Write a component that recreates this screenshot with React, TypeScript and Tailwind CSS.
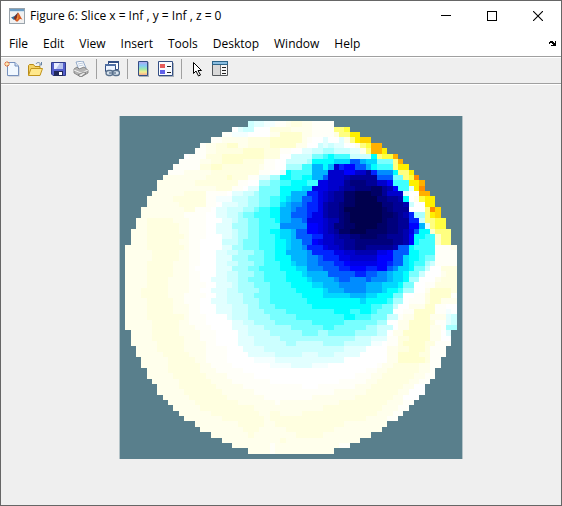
import type { ReactNode } from "react";

const PALETTE: Record<string, string> = {
  K: "#00004d", j: "#000066", k: "#00007c", m: "#000096", n: "#0000b0",
  p: "#0000cc", b: "#0000e6", B: "#0000ff", u: "#0024ff", U: "#005cff",
  v: "#008cff", V: "#00b4ff", c: "#00d8ff", C: "#00ffff", d: "#40ffff",
  e: "#78ffff", f: "#a8ffff", g: "#ccffff", h: "#e2ffff", i: "#f4ffff",
  W: "#ffffff", w: "#fffff8", x: "#ffffec", y: "#ffffe0", z: "#ffffce",
  Z: "#ffff80", Y: "#ffff40", a: "#fff000", o: "#ffd400", O: "#ffb000",
  r: "#ff8c00",
};

const GRID = 64;

// First column inside the disc for rows 1..31; the lower half mirrors it.
const LEFT = [
  64, 24, 21, 19, 17, 15, 14, 12, 11, 10, 9, 8, 7, 7, 6, 5, 5, 4, 4, 3, 3, 2,
  2, 2, 1, 1, 1, 1, 1, 1, 1, 1,
];

// Rows 1..62 of the slice: each token is a colour key and the column it runs up to.
const ROWS = [
  "g25 h27 i29 w31 x32 y34 x36 w40",
  "W22 h23 g25 W28 y32 x36 w40 Z42 Y43",
  "w21 i24 W28 x30 z34 x36 w40 y41 Z43 a45",
  "w19 x24 y28 z34 x35 w36 W38 h39 W41 h42 x43 Z44 a45 o47",
  "w16 x18 y20 z22 x24 y28 z33 x35 W37 g38 h39 g40 h42 W44 x45 Z46 Y47 O49",
  "w16 x18 y23 z27 y30 w32 W34 h36 g38 f40 g43 h45 x46 Z47 O49 a50",
  "W13 w16 y19 z27 y30 W32 g36 e38 d39 C40 d43 g47 C48 Z49 Y51 O52",
  "w15 x17 y19 z23 y27 w29 W31 g35 f36 C40 c43 U45 V46 c48 e51 Z52 O53",
  "w15 y17 z19 y26 x27 w29 W31 f34 d36 V38 C39 V40 p41 u42 B44 U46 V47 C48 d51 Z52 a54",
  "w12 x17 y26 w28 W30 h31 C32 d36 V39 p42 B44 p46 m47 u48 v51 C52 Z54 a55",
  "x16 y20 z21 y24 w26 h28 f30 C32 d34 C36 V38 U39 p42 n43 m48 U51 e53 Z54 Y55 r56",
  "x14 y22 w24 W26 f28 e30 d32 C35 d37 b39 p42 m43 k46 m48 p50 B51 d54 a56 O57",
  "x18 y21 w23 W24 h26 e30 C34 c36 b39 p41 n42 m44 k47 j49 m50 n51 B52 d54 h55 a56 r57",
  "x12 y16 w20 W21 h23 g25 f26 e30 C32 V35 u37 b38 p39 n40 m42 j44 K47 j49 m50 p53 h54 W56 O58",
  "x10 y16 w18 i21 g24 f26 e28 d30 C31 c32 V34 U36 u37 b38 p39 n40 m42 j44 K48 k50 m52 n53 C54 W55 x56 Y57 a59",
  "x11 y16 w18 W19 h22 g24 f26 e28 d30 c31 V32 v34 U35 u37 b38 n39 m41 k42 j44 K49 k51 m53 n54 g55 W57 a59",
  "x12 y14 w17 W18 h20 g23 f25 e26 d28 C30 V32 v33 U35 u37 b38 n39 m41 k42 K49 j50 k51 m54 W57 Z58 r59 o60",
  "x12 w16 W18 h20 g22 f23 e25 d28 C30 V32 U35 u36 b38 n39 m41 k42 j43 K49 j51 k52 m53 n54 u55 f57 Z58 a59 o60",
  "x5 y10 x13 w16 W19 h21 g22 f24 e26 d29 C30 V32 v34 U35 b38 p39 n41 k42 j43 K49 j50 k52 m54 u56 g57 Z59 Y61",
  "x5 y11 x13 w16 W18 h21 f24 e26 d30 v33 v35 B37 b38 p39 n40 k42 j44 K48 j50 k52 m54 B56 V57 h58 Z59 Y61",
  "x5 y11 x13 w16 W18 h21 g22 f24 e26 d28 C30 c32 V33 U35 B37 b38 p39 n40 m41 j43 K46 j50 k52 m53 n54 b55 U56 C58 z59 Z62",
  "x5 y12 x13 w16 W19 h21 g22 f24 e26 d29 C30 c32 V33 U36 u38 p40 n41 m43 k45 j48 k50 m53 n54 B55 C57 d59 z60 Z62",
  "x5 y11 x13 w15 W19 g22 f23 e26 d29 C31 c32 V34 U36 B37 b38 p40 n42 m44 k51 m53 n54 B55 C56 d59 z60 Z62",
  "x5 y12 x13 w15 W19 h21 f23 e26 d29 C31 c32 V34 v35 u38 b39 p41 n42 m44 k46 m51 n52 U54 C55 d59 w62 x63",
  "x6 y11 x13 w15 W18 h20 g22 f25 e27 d29 C31 V35 v36 u40 b42 p44 n48 b50 B51 U54 C56 d59 w63",
  "x6 y11 x13 w15 W18 h21 f24 e27 d29 C32 V35 v37 U38 u41 b43 p48 B51 U53 c54 C56 d57 e59 w63",
  "x5 y10 x13 w15 W18 h20 g22 f25 e27 d30 C32 c33 V35 v37 U40 u42 B43 b48 B50 u51 U53 c54 C55 d57 f58 g59 w63",
  "x5 y10 x13 w14 W18 h21 f24 e26 d30 C33 c35 v38 U41 u43 B46 u48 B50 U51 v52 c54 C55 e57 g58 W60 y63",
  "x5 y10 x13 w15 W18 h20 g22 f25 e27 d31 C34 c35 V39 U44 u46 U48 v50 V51 c53 C54 e56 g57 W60 x61 y63",
  "x5 y9 x13 w15 W17 h20 g22 f24 e27 d31 C35 c36 V40 v41 U43 v46 U47 v50 V51 c53 C54 f56 W59 x60 y63",
  "x5 y9 x13 w16 W18 h21 g22 f25 e28 d32 C36 c38 V41 v46 V49 c52 C53 e55 W57 w59 y63",
  "x4 y9 x13 w15 W17 h20 g22 f26 e28 d33 C38 c39 V42 v46 V49 c50 C52 d53 f55 W57 x58 z62 y63",
  "x4 y9 x12 w16 W18 h20 g23 f25 e28 d34 C38 c43 V46 c48 C51 e53 W55 w57 y58 z62 w63",
  "x5 y10 x12 w15 W17 h20 g23 f26 e28 d35 C45 c46 C50 d51 f53 W54 w57 y58 z60 x63",
  "x5 y10 x13 w15 W18 h21 g24 f26 e29 d36 C47 d49 e51 g52 W54 x57 z59 w61 W63",
  "x5 y10 x13 w15 W18 h21 g24 f27 e31 d40 C43 d45 C47 d48 e51 W53 w55 z59 w61 i62 W63",
  "x5 y12 x13 w16 W20 h21 g24 f28 e33 d42 C44 d47 e50 g52 w53 x55 z58 x61 h62 g63",
  "x6 y11 x13 w16 W21 h23 g25 f29 e36 d42 e48 f50 W52 x54 z58 y59 w61 h62 g63",
  "x6 y11 x14 w17 W21 h24 g27 f32 e38 d40 e46 f48 g51 W52 x54 z58 x60 w61 f63",
  "x6 y11 x15 w18 W22 h24 g28 f34 e37 f39 e44 f48 g50 W51 x53 z58 x60 W61 h62",
  "x6 y12 x15 w18 W22 h25 g30 f44 g47 h50 w52 y54 z58 x60 W62",
  "x7 y12 x16 w18 W22 h25 g31 f33 g38 f42 g47 i49 W50 w52 y53 z57 y59 w61",
  "x7 y12 x16 w20 W23 h27 g42 h46 W50 x52 y54 z57 y58 w61",
  "x8 y13 x16 w20 W24 h29 g34 h37 g40 h45 W50 x52 z56 y58 w60",
  "x9 y14 x16 w20 W25 i29 h42 W50 x52 z57 y58 w60",
  "x9 y15 x17 w21 W28 i32 h36 i39 W48 w49 x51 y56 x58 w59",
  "x9 y15 x18 w23 W46 w48 x50 y56 x58 w59",
  "x10 y16 x20 w25 W44 w47 x49 y55 x57 w58",
  "x11 y17 x21 w28 W41 w46 x48 y54 x56 w58",
  "x11 y18 x23 w34 W37 w44 x47 y53 x55 W57",
  "x12 y19 x25 w40 x46 y52 x54 W57",
  "x13 y20 x27 w36 x44 y51 x53 W56",
  "x14 y22 x29 w30 x41 y50 x53 w55",
  "x15 y25 x38 y49 x52 w54",
  "x17 y26 x28 y30 x34 y48 x51 w53",
  "x19 y27 x28 y46 x50 w52",
  "x22 y27 x29 y42 x49",
  "x23 y26 x31 y40 x48",
  "x24 y25 x33 y38 x46",
  "x30 y31 x43",
  "x28 w29 x41 w43",
  "x28 w29 x40",
];

function SliceMap() {
  const cells: ReactNode[] = [];
  ROWS.forEach((row, i) => {
    const y = i + 1;
    let x = y < 32 ? LEFT[y] : LEFT[63 - y];
    const last = GRID - x;
    const runs = row.split(" ");
    runs.forEach((run, j) => {
      const end = j === runs.length - 1 ? last : Math.min(Number(run.slice(1)), last);
      if (end > x) {
        cells.push(
          <rect key={`${y}-${x}`} x={x} y={y} width={end - x} height={1} fill={PALETTE[run[0]]} />,
        );
        x = end;
      }
    });
  });
  return (
    <svg
      role="img"
      aria-label="Slice plot"
      viewBox="0 0 64 64"
      preserveAspectRatio="none"
      shapeRendering="crispEdges"
      className="block h-full w-full bg-[#597f8c]"
    >
      {cells}
    </svg>
  );
}

function Icon({ children }: { children: ReactNode }) {
  return (
    <svg viewBox="0 0 16 16" className="block size-4" aria-hidden="true">
      {children}
    </svg>
  );
}

function ToolButton({ label, children }: { label: string; children: ReactNode }) {
  return (
    <button type="button" aria-label={label} title={label} className="block size-4 shrink-0">
      <Icon>{children}</Icon>
    </button>
  );
}

function Separator() {
  return <div className="h-5 w-px shrink-0 bg-[#a0a0a0]" />;
}

function MatlabIcon() {
  return (
    <svg viewBox="0 0 16 16" className="block size-4 shrink-0" aria-hidden="true">
      <rect x=".5" y=".5" width="15" height="15" fill="#f1f1f1" stroke="#9aa4ac" />
      <path d="M1 1h14v2H1z" fill="#6b9cc4" />
      <path d="M1 3h14v1H1z" fill="#d3e3ef" />
      <path d="M2 9.5 5.5 8 9 4.5 8 10l-3 2z" fill="#326f9f" />
      <path d="M4.8 9.8 9 4.5 8.2 10 6.2 12.5z" fill="#812d20" />
      <path d="M9 4.5c1.6 1 2.6 5 4.6 7.3-1.8-1.2-3-1-4.2.9-.8 1.2-1.6 1.3-3.2-.3C8 10.500 8.400 8 9 4.500z" fill="#d75a22" />
      <path d="M9 4.500c.2 2 .6 4 .1 6.500L7.300 12c1.200-2 1.500-4.500 1.700-7.500z" fill="#f3a13c" />
    </svg>
  );
}

const MENUS = ["File", "Edit", "View", "Insert", "Tools", "Desktop", "Window", "Help"];

export default function App() {
  return (
    <div className="border border-[#666666] bg-[#efefef] font-['Open_Sans','Noto_Sans',sans-serif] text-xs text-black">
      <header className="flex h-[30px] items-center bg-white pl-2">
        <MatlabIcon />
        <h1 className="ml-[5px] min-w-0 flex-1 truncate text-[12px] leading-4">
          Figure 6: Slice x = Inf , y = Inf , z = 0
        </h1>
        <div className="flex shrink-0">
          <button type="button" aria-label="Minimize" className="flex h-[30px] w-[46px] items-center justify-center">
            <svg viewBox="0 0 10 10" className="size-[10px]" shapeRendering="crispEdges">
              <path d="M0 4h10v1H0z" />
            </svg>
          </button>
          <button type="button" aria-label="Maximize" className="flex h-[30px] w-[46px] items-center justify-center">
            <svg viewBox="0 0 10 10" className="size-[10px]" shapeRendering="crispEdges">
              <path d="M.5.5h9v9h-9z" fill="none" stroke="#000" />
            </svg>
          </button>
          <button type="button" aria-label="Close" className="flex h-[30px] w-[46px] items-center justify-center">
            <svg viewBox="0 0 10 10" className="size-[10px]">
              <path d="m0 0 10 10M10 0 0 10" fill="none" stroke="#000" strokeWidth="1.1" />
            </svg>
          </button>
        </div>
      </header>

      <nav aria-label="Menu bar" className="flex h-[25px] items-center bg-white pr-1 pl-2">
        <div className="flex flex-1 gap-[15px]">
          {MENUS.map((name) => (
            <button key={name} type="button" className="text-[12px] leading-4">
              {name}
            </button>
          ))}
        </div>
        <button type="button" aria-label="Dock figure">
          <svg viewBox="0 0 8 6" className="block h-[6px] w-2" shapeRendering="crispEdges">
            <path d="M0 1h1V0h3v1h1v1h1V0h1v5H2V4h2V3H3V2H1v1H0z" />
          </svg>
        </button>
      </nav>

      <div
        role="toolbar"
        aria-label="Figure toolbar"
        className="flex h-7 items-center gap-[7px] border-y border-[#a0a0a0] pb-[2px] pl-[3px] shadow-[inset_0_1px_0_#fff,0_1px_0_#fff]"
      >
        <ToolButton label="New Figure">
          <path d="M4.500 2.500h7l4 4v9h-11z" fill="#7f91ad" opacity=".5" />
          <path d="M3.500 1.500h7.500l3.500 3.500v9.500h-11z" fill="#f1f8ff" stroke="#7791bd" />
          <path d="M11 1.500V5h3.500" fill="#cfe0f5" stroke="#7791bd" />
          <path d="M3 0v6M0 3h6M1 1l4 4M5 1 1 5" stroke="#e8763c" />
          <circle cx="3" cy="3" r="1.300" fill="#ffe9a8" />
        </ToolButton>
        <ToolButton label="Open File">
          <path d="M1.500 14V4.500l1-1h4l1.500 2h5V14z" fill="#f4d264" stroke="#b88b18" />
          <path d="m1.500 14.500 2.500-7h11.500l-2.500 7z" fill="#ffe88c" stroke="#c1941d" />
          <path d="M9 3c1-2 3.500-2 5 .5M14.500 1v3H12" fill="none" stroke="#6682a3" />
        </ToolButton>
        <ToolButton label="Save Figure">
          <path d="M1.500 1.500h14v13H3l-1.500-1.500z" fill="#5560cc" stroke="#303c8c" />
          <path d="M4 2h9v6H4z" fill="#e9edff" />
          <path d="M10 2h3v6H6z" fill="#b6c2ee" />
          <path d="M4 10h9v5H4z" fill="#202858" />
          <path d="M9 11h3v3H9z" fill="#fff" />
        </ToolButton>
        <ToolButton label="Print Figure">
          <path d="m3 1 7-1 3 7-7 2z" fill="#fafcff" stroke="#7b98bc" strokeWidth=".8" />
          <path d="m5 3 5-1M5.500 5l5-1" stroke="#a6b8cc" strokeWidth=".7" />
          <path d="m1 8 3-2 2 2 5-2 4 3v3l-7 4-7-4z" fill="#b4b4b4" stroke="#777" strokeWidth=".8" />
          <path d="m1 9 7 3 7-3" fill="none" stroke="#f1f1f1" />
          <path d="m5 14 6-3 2 1-5 4z" fill="#e9e9e9" stroke="#666" strokeWidth=".7" />
        </ToolButton>
        <Separator />
        <ToolButton label="Link Plot">
          <path d="M4.500 .5h10v8h-10z" fill="#fff" stroke="#344f84" />
          <path d="M4 0h11v2H4z" fill="#344f84" />
          <path d="M1.500 3.500h10v7h-10z" fill="#edf4ff" stroke="#344f84" />
          <path d="M1 3h11v2H1z" fill="#4f6fa4" />
          <g stroke="#58708c" strokeWidth="1.300">
            <rect x="2" y="9.500" width="7" height="5" rx="2.400" fill="#d9e4ef" />
            <rect x="8.500" y="9.500" width="7" height="5" rx="2.400" fill="#d9e4ef" />
          </g>
          <path d="M5 12h7" stroke="#58708c" strokeWidth="1.300" />
        </ToolButton>
        <Separator />
        <ToolButton label="Insert Colorbar">
          <defs>
            <linearGradient id="colorbar" x2="0" y2="1">
              <stop stopColor="#b6a4f0" />
              <stop offset=".3" stopColor="#83cdf5" />
              <stop offset=".55" stopColor="#a0eaa8" />
              <stop offset=".75" stopColor="#f5ee91" />
              <stop offset="1" stopColor="#f2a18f" />
            </linearGradient>
          </defs>
          <path d="M4 1h10v15H4z" fill="#aab2bb" />
          <path d="M3.500.5h9v14h-9z" fill="url(#colorbar)" stroke="#344f84" />
        </ToolButton>
        <ToolButton label="Insert Legend">
          <path d="M1 2h15v14H1z" fill="#aab2bb" />
          <path d="M.5.500h14v14H.5z" fill="#f8faff" stroke="#344f84" />
          <path d="M2 3h5v4H2z" fill="#e55b5b" />
          <path d="M2 9h5v4H2z" fill="#6060e8" />
          <path d="M9 5.500h4M9 11.500h4" stroke="#222" />
        </ToolButton>
        <Separator />
        <ToolButton label="Edit Plot">
          <path d="M4.500 1.500v11l2.500-2.500 2.500 5 2-1-2.500-4.500h3.500z" fill="#fff" stroke="#000" />
        </ToolButton>
        <ToolButton label="Open Property Inspector">
          <path d="M.5 1.500h15v13H.5z" fill="#f7f7f7" stroke="#54585c" />
          <path d="M0 0h16v4H0z" fill="#2c6488" />
          <path d="M1 1h14v2H1z" fill="#8abde0" />
          <path d="M1 4h7v10H1z" fill="#d8d8d8" />
          <path d="M8.500 4v10" stroke="#777" />
          <path d="M10 6.500h4M10 9.500h4M10 12.500h4" stroke="#222" />
        </ToolButton>
      </div>

      <main className="flex justify-center pt-8 pr-[52px] pb-[46px] pl-[72px]">
        <div className="h-[343px] w-[344px] border-x border-[#b4c3c8]">
          <SliceMap />
        </div>
      </main>
    </div>
  );
}
